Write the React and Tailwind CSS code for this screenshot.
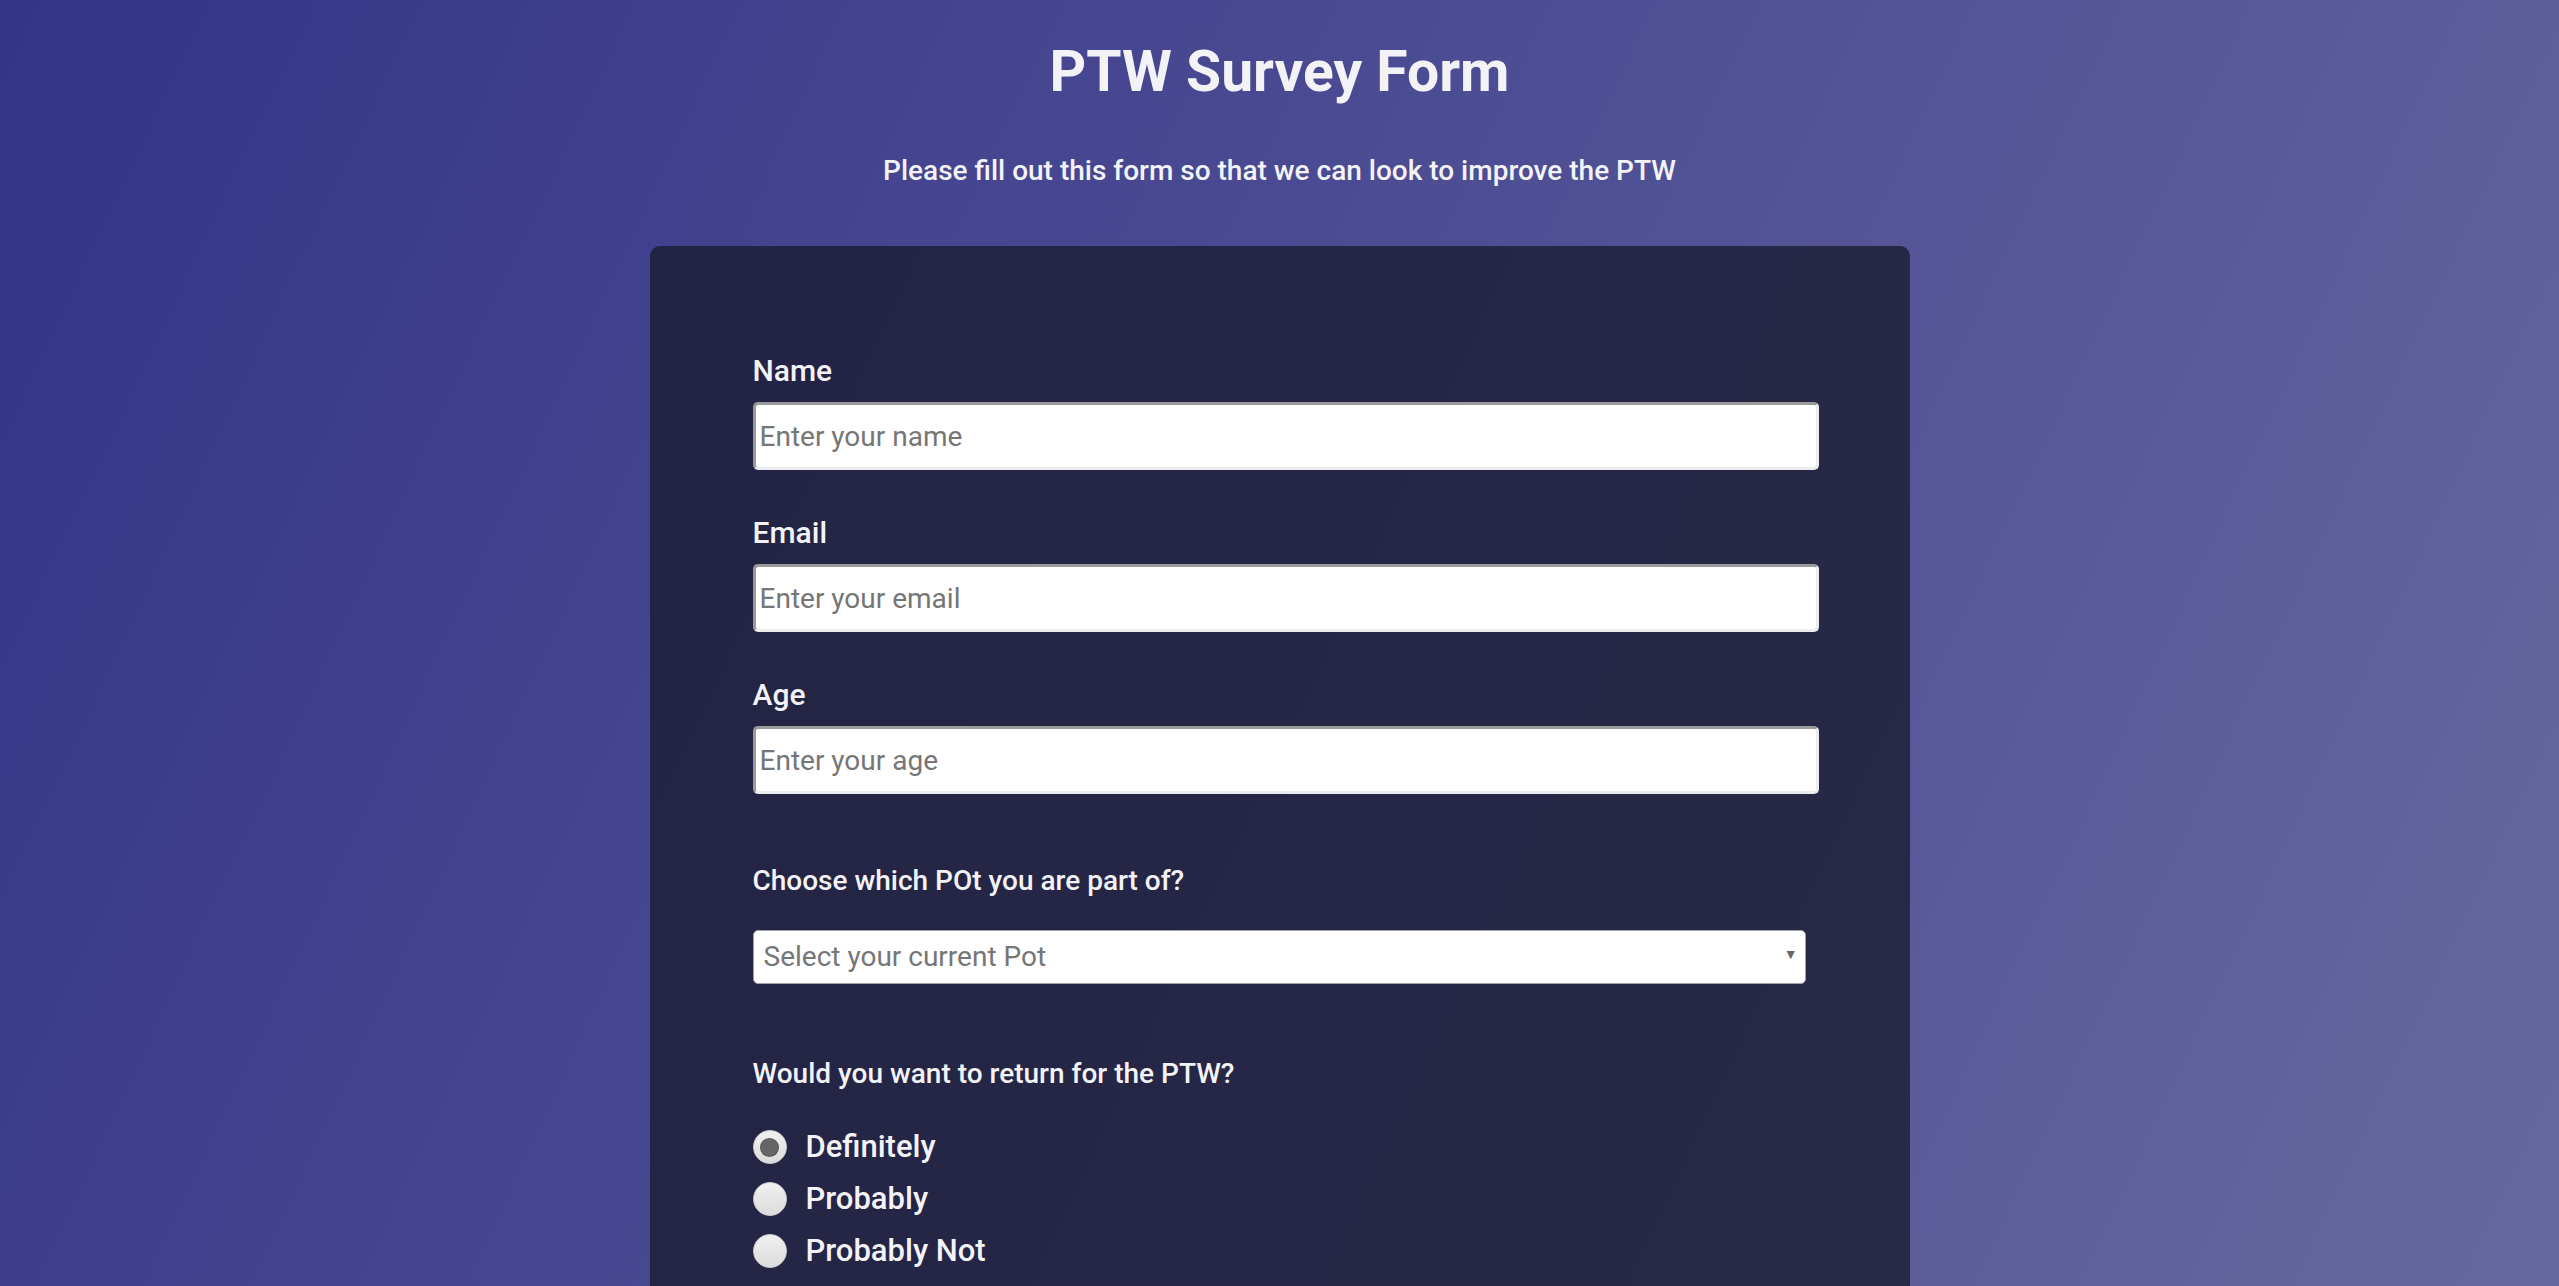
import { useState } from 'react';

const fields = [
  { id: 'name', label: 'Name', type: 'text', placeholder: 'Enter your name' },
  { id: 'email', label: 'Email', type: 'email', placeholder: 'Enter your email' },
  { id: 'age', label: 'Age', type: 'number', placeholder: 'Enter your age' },
];

const options = ['Definitely', 'Probably', 'Probably Not'];

export default function App() {
  const [answer, setAnswer] = useState('Definitely');

  return (
    <div className="min-h-screen bg-[#1b1b32] font-['Roboto',sans-serif] text-[#f3f3f7]">
      <div className="min-h-screen bg-fixed bg-[linear-gradient(115deg,rgba(58,58,158,0.8),rgba(136,136,206,0.7))] pt-[38px]">
        {/* Header */}
        <h1 className="text-center text-[57px] font-bold leading-[67px]">PTW Survey Form</h1>
        <p className="mt-[46px] text-center text-[28px] font-medium leading-[40px]">
          Please fill out this form so that we can look to improve the PTW
        </p>

        {/* Form card */}
        <form className="mx-auto mt-[55px] w-[1260px] rounded-[10px] bg-[rgba(27,27,50,0.8)] pl-[103px] pr-[104px] pt-[107px] pb-[120px]">
          {fields.map((f, i) => (
            <div key={f.id} className={i > 0 ? 'mt-[45px]' : ''}>
              <label htmlFor={f.id} className="block text-[30px] font-medium leading-[36px]">
                {f.label}
              </label>
              <input
                id={f.id}
                type={f.type}
                placeholder={f.placeholder}
                className="mt-[13px] block h-[68px] w-[1066px] rounded-[5px] border-[3px] border-t-[#9a9a9a] border-l-[#9a9a9a] border-b-[#ececef] border-r-[#ececef] bg-white pl-[4px] text-[28px] text-[#222] placeholder:text-[#767676] outline-none"
              />
            </div>
          ))}

          <p className="mt-[67px] text-[28px] font-medium leading-[39px]">Choose which POt you are part of?</p>
          <div className="relative mt-[30px]">
            <select
              defaultValue=""
              className="block h-[54px] w-full appearance-none rounded-[5px] border border-[#a0a0a8] bg-white pl-[10px] text-[28px] text-[#767676] outline-none"
            >
              <option value="" disabled>Select your current Pot</option>
              <option>Pot 1</option>
              <option>Pot 2</option>
              <option>Pot 3</option>
            </select>
            <span className="pointer-events-none absolute right-[8px] top-[14px] text-[14px] text-[#666]">▼</span>
          </div>

          <p className="mt-[70px] text-[28px] font-medium leading-[39px]">Would you want to return for the PTW?</p>
          <div className="mt-[36px] flex flex-col gap-[16px]">
            {options.map(o => (
              <label key={o} className="flex h-[36px] cursor-pointer items-center gap-[19px] text-[31px] font-medium">
                <input
                  type="radio"
                  name="return"
                  checked={answer === o}
                  onChange={() => setAnswer(o)}
                  className="sr-only"
                />
                <span className="flex h-[34px] w-[34px] items-center justify-center rounded-full border border-[#c8c8cc] bg-[linear-gradient(#f0f0f0,#dcdcdc)]">
                  {answer === o && <span className="h-[17px] w-[17px] rounded-full bg-[#666] shadow-[0_0_0_1px_#555]" />}
                </span>
                {o}
              </label>
            ))}
          </div>
        </form>
      </div>
    </div>
  );
}
